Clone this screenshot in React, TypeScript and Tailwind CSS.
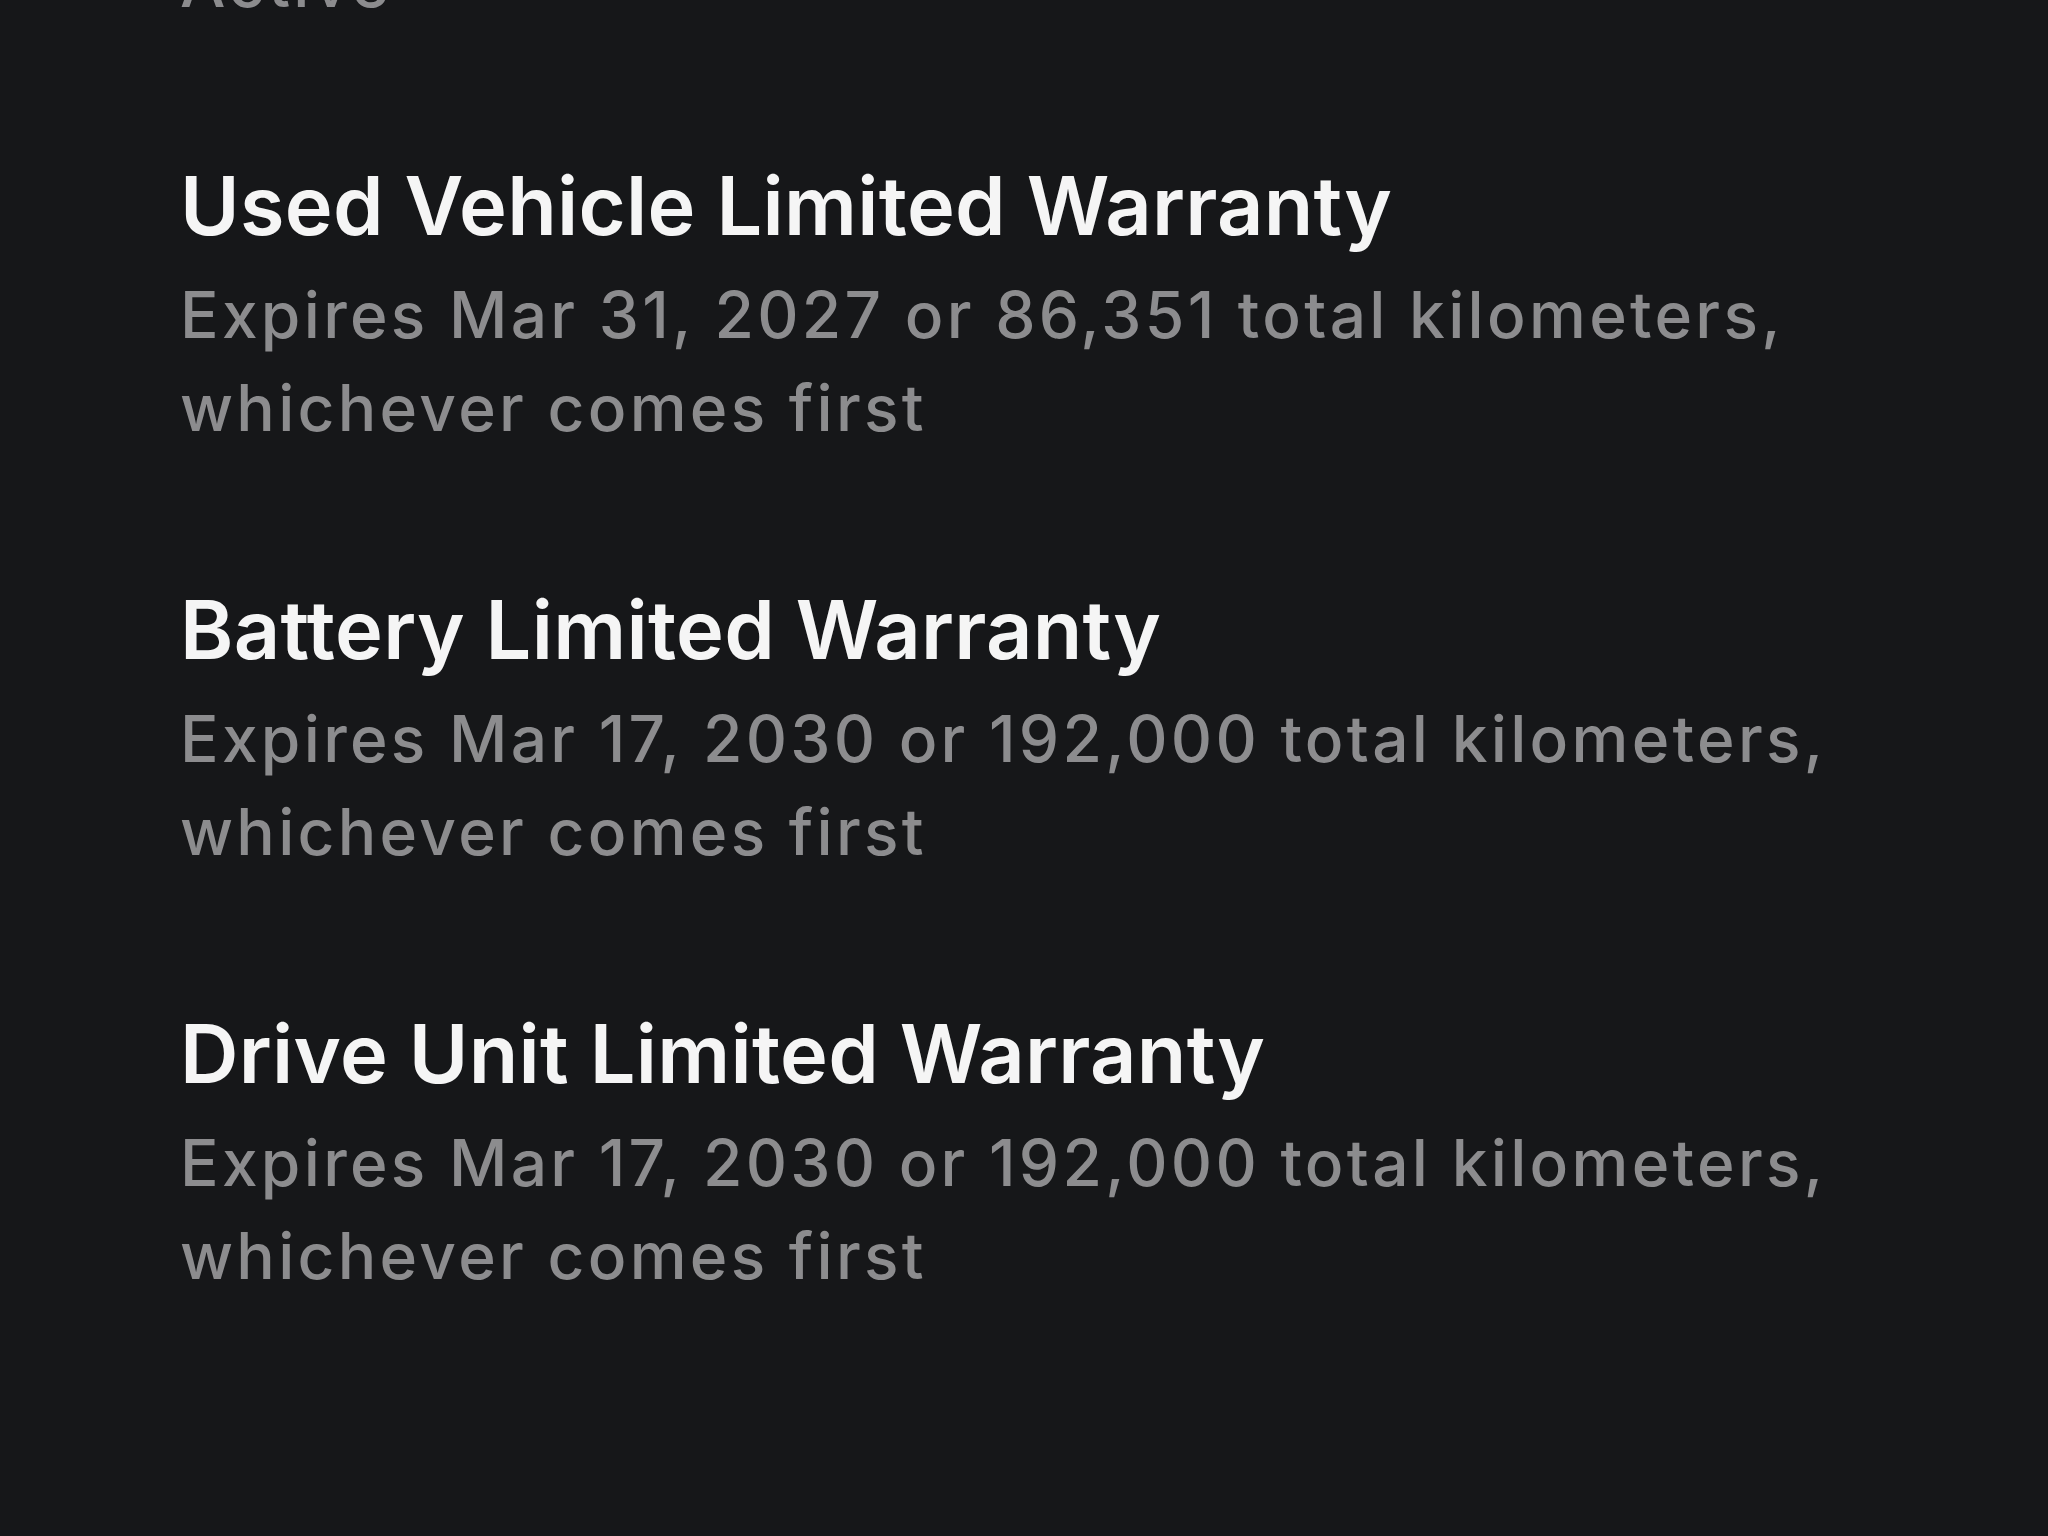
const warranties = [
  {
    title: "Used Vehicle Limited Warranty",
    lines: ["Expires Mar 31, 2027 or 86,351 total kilometers,", "whichever comes first"],
  },
  {
    title: "Battery Limited Warranty",
    lines: ["Expires Mar 17, 2030 or 192,000 total kilometers,", "whichever comes first"],
  },
  {
    title: "Drive Unit Limited Warranty",
    lines: ["Expires Mar 17, 2030 or 192,000 total kilometers,", "whichever comes first"],
  },
];

export default function App() {
  return (
    <div className="h-[1536px] w-[2048px] overflow-hidden bg-[#161719] px-[180px] font-['Inter',_'Liberation_Sans',_sans-serif]">
      <div className="-mt-[63px] flex flex-col gap-[126px]">
        {/* status line of the section above, scrolled mostly out of view */}
        <div className="text-[64px] font-medium leading-[93px] tracking-[3.2px] text-[#8c8c8e]">Active</div>
        {warranties.map((w) => (
          <div key={w.title} className="flex flex-col">
            <div className="whitespace-nowrap text-[81px] font-semibold leading-[100px] tracking-[0.3px] text-[#f5f5f5]">
              {w.title}
            </div>
            <div className="mt-[12px] whitespace-nowrap text-[64px] font-medium leading-[93px] tracking-[3.3px] text-[#8c8c8e]">
              {w.lines.map((l) => (
                <div key={l}>{l}</div>
              ))}
            </div>
          </div>
        ))}
      </div>
    </div>
  );
}
